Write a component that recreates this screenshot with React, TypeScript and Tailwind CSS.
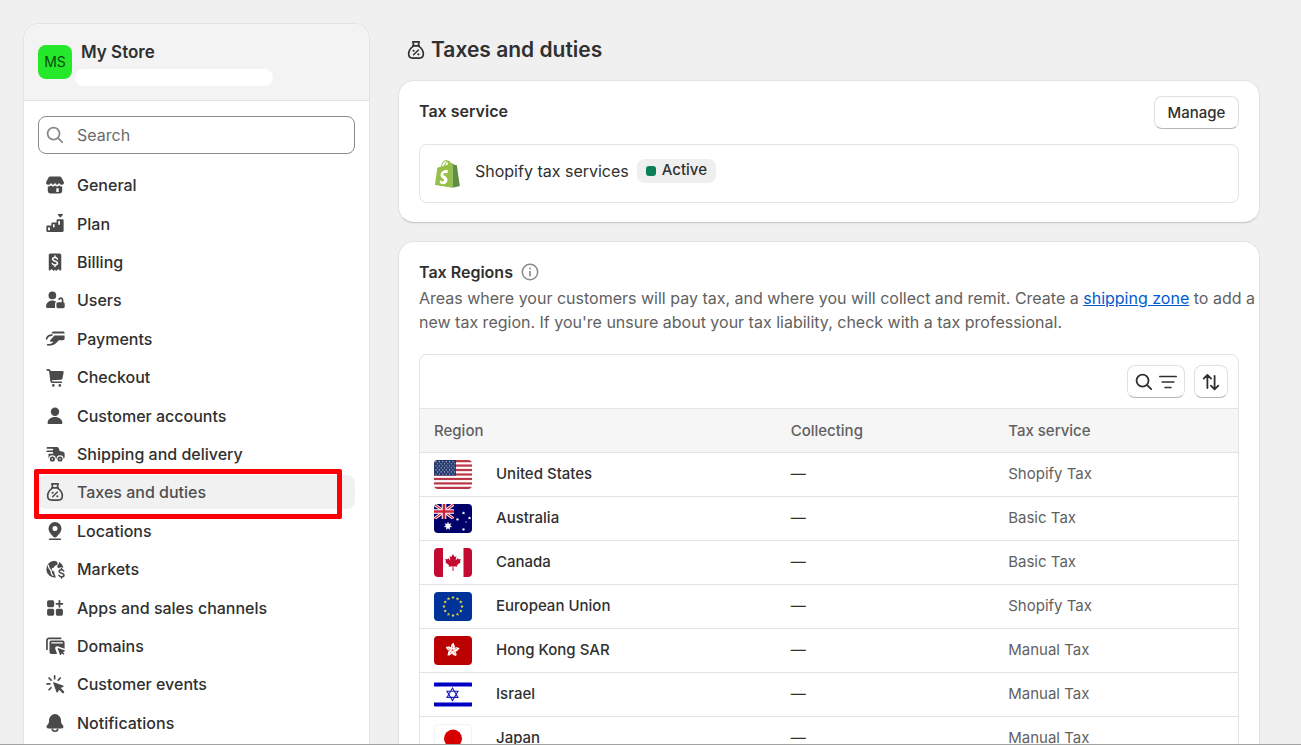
import type { ReactNode } from "react";

interface NavItem {
  label: string;
  icon: ReactNode;
  active?: boolean;
}

interface Region {
  name: string;
  flag: ReactNode;
  collecting: string;
  service: string;
}

function Icon({ children, className = "size-6" }: { children: ReactNode; className?: string }) {
  return (
    <svg viewBox="0 0 20 20" fill="currentColor" className={`${className} shrink-0`} aria-hidden="true">
      {children}
    </svg>
  );
}

function MoneyBag({ className }: { className?: string }) {
  return (
    <Icon className={className}>
      <g fill="none" stroke="currentColor" strokeWidth="1.4" strokeLinecap="round" strokeLinejoin="round">
        <path d="M8 5.8 7.400 3.200h5.200L12 5.800" />
        <path d="M7.300 6.600h5.400" />
        <path d="M7.500 7C5.300 8.500 3.900 11 3.900 13.400c0 2.200 1.500 3.400 3.400 3.400h5.400c1.900 0 3.400-1.200 3.400-3.400 0-2.400-1.400-4.900-3.600-6.400" />
        <path d="m8 14 4-4" strokeWidth="1.200" />
      </g>
      <circle cx="8" cy="10.600" r=".9" />
      <circle cx="12" cy="13.600" r=".9" />
    </Icon>
  );
}

function SearchIcon({ className }: { className?: string }) {
  return (
    <Icon className={className}>
      <g fill="none" stroke="currentColor" strokeWidth="1.5" strokeLinecap="round">
        <circle cx="8.800" cy="8.800" r="5" />
        <path d="m12.600 12.600 3.400 3.400" />
      </g>
    </Icon>
  );
}

const navItems: NavItem[] = [
  {
    label: "General",
    icon: (
      <Icon>
        <path d="M6.200 3h7.600a2 2 0 0 1 1.800 1.100l1.600 3.200c.2.4.3.700.3 1a1.800 1.800 0 0 1-2 1.500c-.9 0-1.600-.8-2.100-1.500-.5 0-.9 1.500-1.700 1.500S10.400 8.300 10 8.300s-.9 1.500-1.700 1.500-1.200-1.500-1.700-1.500c-.5.700-1.200 1.500-2.100 1.500a1.800 1.800 0 0 1-2-1.500c0-.3.100-.6.300-1l1.600-3.200A2 2 0 0 1 6.200 3z" />
        <path fillRule="evenodd" d="M4 11.200c1 .1 1.900-.300 2.600-1 .9 1.300 2.600 1.300 3.400 0 .8 1.300 2.500 1.300 3.400 0 .7.700 1.600 1.100 2.600 1v3.900a2 2 0 0 1-2 2H6a2 2 0 0 1-2-2zm7.100 1.600v3.100h2v-3.100z" />
      </Icon>
    ),
  },
  {
    label: "Plan",
    icon: (
      <Icon>
        <path fillRule="evenodd" d="M4 11.200h3V9.400c0-.4.3-.7.7-.7h3.600V7c0-.6.4-1 1-1h3.900c.6 0 1 .4 1 1v8.700c0 .6-.4 1-1 1H3.800c-.6 0-1-.4-1-1v-3.500c0-.6.5-1 1.200-1zm.2 1.700v2.400h1.600v-2.400zM8.300 10.300v2.400h1.400v-2.400zM12.700 7.500v3.200h1.400V7.500z" />
        <path d="M12.600 1.700h3.700c.3 0 .5.3.3.600l-1.700 2.100c-.2.3-.6.3-.8 0l-1.700-2.100c-.2-.300-.1-.600.2-.600z" />
      </Icon>
    ),
  },
  {
    label: "Billing",
    icon: (
      <Icon>
        <path d="M6.300 3h7.400c.9 0 1.500.7 1.500 1.500v12c0 .6-.7.9-1.100.5l-1.300-1.200-1.300 1.200a.8.800 0 0 1-1 0L10 16.200l-.6.800a.8.800 0 0 1-1 0l-1.200-1.200L5.900 17c-.4.400-1.100.1-1.100-.5v-12C4.800 3.700 5.400 3 6.300 3z" />
        <path d="M12 7.500c-.3-.8-1-1.200-2-1.200-1.200 0-2 .6-2 1.500 0 2.100 4.100 1 4.100 3.100 0 1-.9 1.600-2.100 1.600-1.100 0-1.900-.5-2.200-1.300M10 5v1.300M10 12.500v1.300" fill="none" stroke="#fff" strokeWidth="1.300" strokeLinecap="round" />
      </Icon>
    ),
  },
  {
    label: "Users",
    icon: (
      <Icon>
        <circle cx="7.800" cy="6.200" r="3.200" />
        <path d="M2.500 15.500c.2-3 2.400-5 5.300-5 1.200 0 2.200.3 3.100.9-.6.500-.9 1.200-.9 2v3.300H3.700c-.7 0-1.200-.5-1.200-1.200z" />
        <rect x="11.200" y="11.900" width="6.900" height="4.900" rx="1.300" />
        <path d="M16.300 12V9.800a1.500 1.500 0 0 0-2.900-.4" fill="none" stroke="currentColor" strokeWidth="1.400" strokeLinecap="round" />
      </Icon>
    ),
  },
  {
    label: "Payments",
    icon: (
      <Icon>
        <path d="M8.600 3.800h8c.8 0 1.400.5 1.400 1.300v.4H7.200c.1-1 .6-1.700 1.400-1.700z" />
        <path d="M9.500 7H18v2.600c0 .8-.6 1.400-1.400 1.400h-3.400c-1.500 1.500-3 3.700-5.600 4.300-1.500.4-2.800.4-3.700.2a.7.700 0 0 1 0-1.400c2 .1 3.800-.4 5-1.900-.9.300-1.900.2-2.800-.2-.4-.2-.5-.7-.1-1z" />
        <path d="M3 9.800c.6-1.700 2.300-3 4.300-3" fill="none" stroke="currentColor" strokeWidth="1.400" strokeLinecap="round" />
      </Icon>
    ),
  },
  {
    label: "Checkout",
    icon: (
      <Icon>
        <path d="M3.500 4h1c.7 0 1.200.5 1.300 1.100l1 8.300c.1.600.5 1 1.100 1h7.300" fill="none" stroke="currentColor" strokeWidth="1.400" strokeLinecap="round" />
        <path d="M5.500 5h10.700c.7 0 1.200.6 1 1.300l-1 5c-.1.500-.6.900-1.100.9l-8.400.6z" />
        <circle cx="8.600" cy="17" r="1.100" />
        <circle cx="14" cy="17" r="1.100" />
      </Icon>
    ),
  },
  {
    label: "Customer accounts",
    icon: (
      <Icon>
        <circle cx="10" cy="6.400" r="3.500" />
        <path d="M3.800 15.600c.2-2.800 2.900-4.700 6.200-4.700s6 1.900 6.200 4.700c0 .6-.4 1.100-1.100 1.100H4.900c-.7 0-1.100-.5-1.100-1.100z" />
      </Icon>
    ),
  },
  {
    label: "Shipping and delivery",
    icon: (
      <Icon>
        <path d="M3.700 4.200h7.600c.8 0 1.500.4 1.800 1.100l.9 2.100 2.600.7c.8.200 1.400.9 1.400 1.700v2.900c0 .7-.5 1.200-1.200 1.200H5.700c-.7 0-1.100-.6-1.100-1.200v-2.900h3.200a.7.700 0 0 0 0-1.400H3.500a.7.700 0 0 1 0-1.400h4.300a.7.700 0 0 0 0-1.400H3.700a.7.700 0 0 1 0-1.400z" />
        <circle cx="7.800" cy="14" r="2.900" fill="#fff" />
        <circle cx="14.200" cy="14" r="2.900" fill="#fff" />
        <circle cx="7.800" cy="14.200" r="1.400" fill="none" stroke="currentColor" strokeWidth="1.500" />
        <circle cx="14.200" cy="14.200" r="1.400" fill="none" stroke="currentColor" strokeWidth="1.500" />
      </Icon>
    ),
  },
  { label: "Taxes and duties", icon: <MoneyBag />, active: true },
  {
    label: "Locations",
    icon: (
      <Icon>
        <path fillRule="evenodd" d="M10 2.500a5.400 5.400 0 0 0-5.400 5.400c0 3.100 2.600 5 4 6.900.7.900 2.100.9 2.800 0 1.400-1.900 4-3.800 4-6.900A5.400 5.400 0 0 0 10 2.500zm0 3.300a2.100 2.100 0 1 1 0 4.200 2.100 2.100 0 0 1 0-4.200z" />
        <path d="M5.500 16.900h9" stroke="currentColor" strokeWidth="1.300" strokeLinecap="round" />
      </Icon>
    ),
  },
  {
    label: "Markets",
    icon: (
      <Icon>
        <path d="M9.600 3.100a7 7 0 1 0 1.300 13.900c-.6-.6-.9-1.400-.7-2.200-.8-.5-1.100-1.600-.6-2.400-.7-.6-1.700-.7-2.200-1.600-.5-.9.3-1.500 1.200-1.800 1-.3.6-1.100 1.200-1.600.7-.6 1.900-.3 2.300-1.300.3-.8-.1-1.500-.4-2.200a7 7 0 0 0-2.100-.8z" />
        <path d="M4.300 6.800c.2 1.700.8 3 2 4.100.8.700.4 1.600.7 2.500.2.700.6 1.300 1.200 1.800" fill="none" stroke="#fff" strokeWidth="1.100" strokeLinecap="round" />
        <path d="M13.300 4.100c2 1 3.400 2.700 3.700 4.900-1.200-.8-2.900-.6-3.900.3-1-.5-1.600-1.300-1-2.300.5-.8 1.500-1.300 1.200-2.900z" />
        <path d="M17.300 11.700c-.3-.7-1-1.100-1.900-1.100-1.100 0-1.900.5-1.900 1.400 0 1.900 4 1 4 2.900 0 .9-.9 1.500-2.100 1.500-1.100 0-1.800-.5-2.100-1.200M15.400 9.400v1.200M15.400 16.400v1.200" fill="none" stroke="currentColor" strokeWidth="1.300" strokeLinecap="round" />
      </Icon>
    ),
  },
  {
    label: "Apps and sales channels",
    icon: (
      <Icon>
        <rect x="3.400" y="3.600" width="5.900" height="5.700" rx="1.300" />
        <rect x="3.400" y="10.700" width="5.900" height="5.700" rx="1.300" />
        <rect x="10.700" y="10.700" width="5.900" height="5.700" rx="1.300" />
        <path d="M13.700 4v5M11.200 6.500h5" stroke="currentColor" strokeWidth="1.500" strokeLinecap="round" />
      </Icon>
    ),
  },
  {
    label: "Domains",
    icon: (
      <Icon>
        <path d="M3.300 12.800V5.300c0-1 .7-1.700 1.700-1.700h9.700" fill="none" stroke="currentColor" strokeWidth="1.400" strokeLinecap="round" />
        <path fillRule="evenodd" d="M7 5.400h9.400c.9 0 1.600.7 1.600 1.600v5.300l-5.700-2c-1.300-.5-2.500.8-2.100 2l1.500 4.300H7c-.9 0-1.600-.7-1.600-1.600V7c0-.9.7-1.600 1.600-1.600zm0 1.500v1h9.500v-1z" />
        <path d="m11.900 11.500 6 2c.5.200.5.800 0 1l-1.300.6 1.300 1.300-.9.900-1.300-1.300-.6 1.300c-.2.400-.8.400-1-.1l-2-5.800z" />
      </Icon>
    ),
  },
  {
    label: "Customer events",
    icon: (
      <Icon>
        <path d="m8.900 8.500 7.800 2.700c.6.200.6 1 0 1.300l-2 .9 2.700 2.700a.9.900 0 0 1-1.300 1.300l-2.700-2.700-.9 2c-.3.600-1.100.6-1.300 0L8.400 9c-.1-.3.200-.6.500-.5z" />
        <path d="M9.700 3.300v2.300M5 5l1.700 1.700M3.400 9.900h2.300M6.700 13.100 5 14.800M14.400 5l-1.700 1.700" fill="none" stroke="currentColor" strokeWidth="1.400" strokeLinecap="round" />
      </Icon>
    ),
  },
  {
    label: "Notifications",
    icon: (
      <Icon>
        <path d="M10 2.600a5 5 0 0 0-5 5v1.200c0 1-.4 1.700-1 2.400l-.6.700c-1 1.200-.3 2.700 1.200 2.700h10.800c1.500 0 2.200-1.500 1.200-2.700l-.6-.7c-.6-.7-1-1.400-1-2.400V7.600a5 5 0 0 0-5-5z" />
        <path d="M7.700 14.600a2.300 2.300 0 0 0 4.600 0" fill="none" stroke="currentColor" strokeWidth="1.400" />
      </Icon>
    ),
  },
];

function Flag({ name, children }: { name: string; children: ReactNode }) {
  return (
    <svg viewBox="0 0 38 29" role="img" aria-label={name} className="block h-[29px] w-[38px] rounded">
      {children}
    </svg>
  );
}

const stripes = [0, 2, 4, 6, 8, 10, 12];
const starRows = [0, 1, 2, 3, 4, 5, 6];

function starPoints(cx: number, cy: number, r: number, spikes = 5, inner = 0.45) {
  return Array.from({ length: spikes * 2 }, (_, i) => {
    const radius = i % 2 ? r * inner : r;
    const angle = (Math.PI * i) / spikes - Math.PI / 2;
    return `${cx + radius * Math.cos(angle)},${cy + radius * Math.sin(angle)}`;
  }).join(" ");
}

const regions: Region[] = [
  {
    name: "United States",
    flag: (
      <Flag name="US">
        <rect width="38" height="29" fill="#fff" />
        {stripes.map((n) => (
          <rect key={n} y={(n * 29) / 13} width="38" height={29 / 13} fill="#b22234" fillOpacity=".9" />
        ))}
        <rect width="22" height="15.600" fill="#25396e" />
        {starRows.map((row) =>
          [0, 1, 2, 3, 4, 5].map((col) => (
            <circle key={`${row}-${col}`} cx={2 + col * 3.4 + (row % 2) * 1.7} cy={1.7 + row * 2.05} r=".6" fill="#c9d3e6" />
          ))
        )}
      </Flag>
    ),
    collecting: "—",
    service: "Shopify Tax",
  },
  {
    name: "Australia",
    flag: (
      <Flag name="AU">
        <rect width="38" height="29" fill="#00006b" />
        <svg width="20" height="15" viewBox="0 0 20 15">
          <path d="M0 0 20 15M20 0 0 15" stroke="#fff" strokeWidth="3" />
          <path d="M0 0 20 15M20 0 0 15" stroke="#d4213d" strokeWidth="1.200" />
          <path d="M10 0v15M0 7.500h20" stroke="#fff" strokeWidth="4.600" />
          <path d="M10 0v15M0 7.500h20" stroke="#d4213d" strokeWidth="2.600" />
        </svg>
        <polygon points={starPoints(14, 22, 4.4, 7, 0.5)} fill="#fff" />
        <polygon points={starPoints(29.5, 9, 1.8, 7)} fill="#fff" />
        <polygon points={starPoints(23.5, 15.5, 1.8, 7)} fill="#fff" />
        <polygon points={starPoints(35.5, 14, 1.8, 7)} fill="#fff" />
        <polygon points={starPoints(29.5, 25.5, 1.8, 7)} fill="#fff" />
        <polygon points={starPoints(32, 18, 0.9)} fill="#fff" />
      </Flag>
    ),
    collecting: "—",
    service: "Basic Tax",
  },
  {
    name: "Canada",
    flag: (
      <Flag name="CA">
        <rect width="38" height="29" fill="#fff" />
        <rect width="9" height="29" fill="#c30b31" />
        <rect x="29.500" width="8.500" height="29" fill="#c30b31" />
        <path
          d="m19 6 1.700 3 1.700-.8-.8 4.200 2.300-2.300.5 1.200 2.400-.4-.9 2.500 1 .7-4 3.200.5 1.500-4-.5.200 4.500h-1.200l.2-4.500-4 .5.500-1.500-4-3.200 1-.7-.9-2.500 2.400.4.500-1.200 2.300 2.300-.8-4.200 1.700.8z"
          fill="#c30b31"
        />
      </Flag>
    ),
    collecting: "—",
    service: "Basic Tax",
  },
  {
    name: "European Union",
    flag: (
      <Flag name="EU">
        <rect width="38" height="29" fill="#003399" />
        {Array.from({ length: 12 }, (_, i) => (
          <polygon
            key={i}
            points={starPoints(19 + 9 * Math.sin((i * Math.PI) / 6), 14.5 - 9 * Math.cos((i * Math.PI) / 6), 1.8)}
            fill="#e6d838"
          />
        ))}
      </Flag>
    ),
    collecting: "—",
    service: "Shopify Tax",
  },
  {
    name: "Hong Kong SAR",
    flag: (
      <Flag name="HK">
        <rect width="38" height="29" fill="#ba0000" />
        {[0, 72, 144, 216, 288].map((deg) => (
          <g key={deg} transform={`rotate(${deg + 5} 18.5 14)`}>
            <path d="M18.500 13.500c-2.400-1-2.600-4.700.2-6.800.8.700.5 1.400 1.100 1.900 1.500 1.300 1 3.900-1.300 4.900z" fill="#fff" />
            <path d="M18.500 12c-.6-.9-.7-1.700-.4-2.600" fill="none" stroke="#ba0000" strokeWidth=".400" />
          </g>
        ))}
      </Flag>
    ),
    collecting: "—",
    service: "Manual Tax",
  },
  {
    name: "Israel",
    flag: (
      <Flag name="IL">
        <rect y="2" width="38" height="25" fill="#fff" />
        <rect y="2.500" width="38" height="4" fill="#0000c4" />
        <rect y="22.500" width="38" height="4" fill="#0000c4" />
        <path d="m18.500 8 5.500 9.400H13zM18.500 20.600 13 11.200h11z" fill="none" stroke="#1c1cb8" strokeWidth="1.100" />
      </Flag>
    ),
    collecting: "—",
    service: "Manual Tax",
  },
  {
    name: "Japan",
    flag: (
      <Flag name="JP">
        <rect x=".5" y=".5" width="37" height="28" rx="3.500" fill="#fff" stroke="#f3f3f3" />
        <circle cx="19" cy="14.500" r="9" fill="#d60000" />
      </Flag>
    ),
    collecting: "—",
    service: "Manual Tax",
  },
];

function ShopifyLogo() {
  return (
    <svg viewBox="0 0 111 125" className="h-7 w-[25px] shrink-0" role="img" aria-label="Shopify">
      <path
        fill="#95bf47"
        fillRule="evenodd"
        d="M74.700 14.800s-1.400.4-3.700 1.100c-.4-1.300-1-2.800-1.800-4.400-2.600-5-6.500-7.700-11.100-7.700-.3 0-.6 0-1 .1-.1-.2-.3-.3-.4-.5-2-2.200-4.600-3.200-7.700-3.100-6 .2-12 4.500-16.800 12.200-3.400 5.400-6 12.200-6.700 17.500-6.900 2.100-11.700 3.600-11.800 3.700-3.500 1.100-3.600 1.200-4 4.500C9.400 40.700.2 111.300.2 111.300l78 13.100V14.600c-1.200 0-2.700.1-3.500.2zM57.200 20.200c-4 1.200-8.400 2.600-12.700 3.900 1.200-4.700 3.600-9.400 6.400-12.500 1.100-1.100 2.600-2.400 4.300-3.200 1.700 3.500 2.100 8.500 2 11.800zM49.100 4.400c1.400 0 2.600.3 3.600.9-1.600.8-3.200 2.100-4.700 3.600-3.800 4.100-6.700 10.500-7.900 16.600-3.600 1.100-7.200 2.200-10.500 3.200 2.200-9.600 10.200-24.100 19.500-24.300z"
      />
      <path
        fill="#5e8e3e"
        d="m78.200 124.400 32.700-8.100S97.400 24.600 97.300 23.900c-.1-.6-.6-1-1.100-1s-9.300-.2-9.300-.2-6.500-6.200-8.700-8.100z"
      />
      <path
        fill="#fff"
        d="m57.900 45.500-3.800 14.300s-4.300-2-9.400-1.600c-7.500.5-7.500 5.200-7.500 6.400.4 6.400 17.300 7.800 18.300 22.900.7 11.900-6.300 20-16.400 20.600-12.200.8-18.900-6.400-18.900-6.400l2.600-11s6.700 5.100 12.100 4.700c3.500-.2 4.800-3.100 4.700-5.100-.5-8.400-14.300-7.900-15.200-21.700-.6-9.800 7-23.300 24-24.300 6.300-.5 9.500 1.200 9.500 1.200z"
      />
    </svg>
  );
}

function Sidebar() {
  return (
    <aside className="flex w-[347px] shrink-0 flex-col rounded-t-2xl border border-b-0 border-[#e3e3e3] bg-white">
      <div className="flex h-[77px] shrink-0 items-center gap-[9px] rounded-t-2xl border-b border-[#e1e1e1] bg-[#f3f3f3] px-3.5">
        <div className="flex size-[34px] items-center justify-center rounded-lg bg-[#25e82b] text-sm text-[#0b4a0d]">MS</div>
        <div className="flex flex-1 flex-col pt-1">
          <p className="text-[17px] leading-5 font-semibold text-[#303030]">My Store</p>
          <div className="mt-[7px] -ml-1.5 h-[17px] w-[198px] rounded-full bg-white" />
        </div>
      </div>
      <label className="mx-3.5 mt-[15px] flex h-[38px] shrink-0 items-center gap-[10px] rounded-lg border border-[#8a8a8a] px-1 text-[#8a8a8a]">
        <SearchIcon />
        <input
          type="search"
          aria-label="Search"
          placeholder="Search"
          className="min-w-0 flex-1 bg-transparent text-base text-[#303030] outline-none placeholder:text-[#6b6b6b]"
        />
      </label>
      <nav className="flex-1 px-3.5 pt-3 pb-0.5">
        <ul className="grid h-full auto-rows-fr">
          {navItems.map((item) => (
            <li key={item.label} className="relative flex items-center">
              <a
                href="#"
                aria-current={item.active ? "page" : undefined}
                className={`flex h-[34px] flex-1 items-center gap-[10px] rounded-lg px-[5px] text-base font-medium ${
                  item.active ? "bg-[#f1f1f1] text-[#4f4f4f]" : "text-[#303030]"
                }`}
              >
                <span className="text-[#4a4a4a]">{item.icon}</span>
                {item.label}
              </a>
              {item.active && (
                <div className="pointer-events-none absolute -top-1 right-[13px] -left-1 h-[50px] rounded-xs border-5 border-[#fb0007]" />
              )}
            </li>
          ))}
        </ul>
      </nav>
    </aside>
  );
}

const card = "rounded-2xl border border-[#e3e3e3] border-b-[#c9c9c9] bg-white px-5 shadow-xs";
const button = "rounded-lg border border-[#e0e0e0] border-b-[#b5b5b5] bg-white text-[#303030] cursor-pointer";

export default function App() {
  return (
    <div className="flex h-screen gap-7 overflow-hidden border-b border-[#a3a3a3] bg-[#f0f0f0] pt-[23px] pr-[41px] pl-[23px] font-['Inter',sans-serif] text-[#303030]">
      <Sidebar />

      <main className="min-w-0 flex-1">
        <h1 className="mt-[13px] flex h-7 items-center gap-[3px] pl-1.5 text-[21px] font-semibold">
          <MoneyBag className="size-6" />
          Taxes and duties
        </h1>

        <section className={`${card} mt-4 pt-[15px] pb-[19px]`}>
          <div className="flex items-start justify-between">
            <h2 className="text-base leading-[30px] font-semibold">Tax service</h2>
            <button type="button" className={`${button} h-[33px] w-[85px] pt-px text-[15px] font-medium`}>
              Manage
            </button>
          </div>
          <div className="mt-[15px] flex h-[59px] items-center rounded-lg border border-[#e3e3e3] px-[15px]">
            <ShopifyLogo />
            <div className="ml-[15px] flex items-center gap-2 pb-1.5">
              <span className="text-base">Shopify tax services</span>
              <span className="flex h-6 items-center gap-1.5 rounded-lg bg-[#efefef] px-[9px] text-[15px] font-medium">
                <span className="size-2.5 rounded-[3px] bg-[#0a7f5a]" />
                Active
              </span>
            </div>
          </div>
        </section>

        <section className={`${card} mt-[18px] pt-[18px] pb-5`}>
          <h2 className="flex h-6 items-center gap-1.5 text-base font-semibold">
            Tax Regions
            <Icon className="size-[22px] text-[#8a8a8a]">
              <circle cx="10" cy="10" r="7" fill="none" stroke="currentColor" strokeWidth="1.400" />
              <path d="M10 9.500v4" stroke="currentColor" strokeWidth="1.500" strokeLinecap="round" />
              <circle cx="10" cy="6.900" r=".9" />
            </Icon>
          </h2>
          <p className="mt-0.5 -mr-5 text-base leading-6 text-[#616161]">
            Areas where your customers will pay tax, and where you will collect and remit. Create a{" "}
            <a href="#" className="text-[#005bd3] underline">
              shipping zone
            </a>{" "}
            to add a new tax region. If you're unsure about your tax liability, check with a tax professional.
          </p>

          <div className="mt-5 rounded-lg border border-[#e3e3e3]">
            <div className="flex h-[54px] items-center justify-end gap-[9px] border-b border-[#e3e3e3] px-2.5">
              <button type="button" aria-label="Search and filter" className={`${button} flex h-[33px] w-[58px] items-center justify-center`}>
                <SearchIcon />
                <Icon>
                  <path d="M3.200 5.400h13.600M5.200 10h9.600M7.600 14.600h4.800" stroke="currentColor" strokeWidth="1.400" strokeLinecap="round" />
                </Icon>
              </button>
              <button type="button" aria-label="Sort" className={`${button} flex h-[33px] w-[34px] items-center justify-center`}>
                <Icon>
                  <path
                    d="M7 15V4.500M3.900 7.200 7 4.100l3.100 3.100M13 5v11M9.900 13l3.100 3.100 3.100-3.100"
                    fill="none"
                    stroke="currentColor"
                    strokeWidth="1.500"
                    strokeLinecap="round"
                    strokeLinejoin="round"
                  />
                </Icon>
              </button>
            </div>
            <table className="w-full table-fixed text-left text-[15px]">
              <thead>
                <tr className="h-[43px] border-b border-[#e3e3e3] bg-[#f6f6f6] text-[#616161]">
                  <th className="w-[43.6%] px-3.5 pt-0.5 font-medium">Region</th>
                  <th className="w-[26.6%] px-3.5 pt-0.5 font-medium">Collecting</th>
                  <th className="px-3.5 pt-0.5 font-medium">Tax service</th>
                </tr>
              </thead>
              <tbody>
                {regions.map((region) => (
                  <tr key={region.name} className="h-11 border-b border-[#e3e3e3]">
                    <td className="px-3.5 font-medium">
                      <div className="flex items-center gap-6">
                        {region.flag}
                        {region.name}
                      </div>
                    </td>
                    <td className="px-3.5">{region.collecting}</td>
                    <td className="px-3.5 text-[#616161]">{region.service}</td>
                  </tr>
                ))}
              </tbody>
            </table>
          </div>
        </section>
      </main>
    </div>
  );
}
